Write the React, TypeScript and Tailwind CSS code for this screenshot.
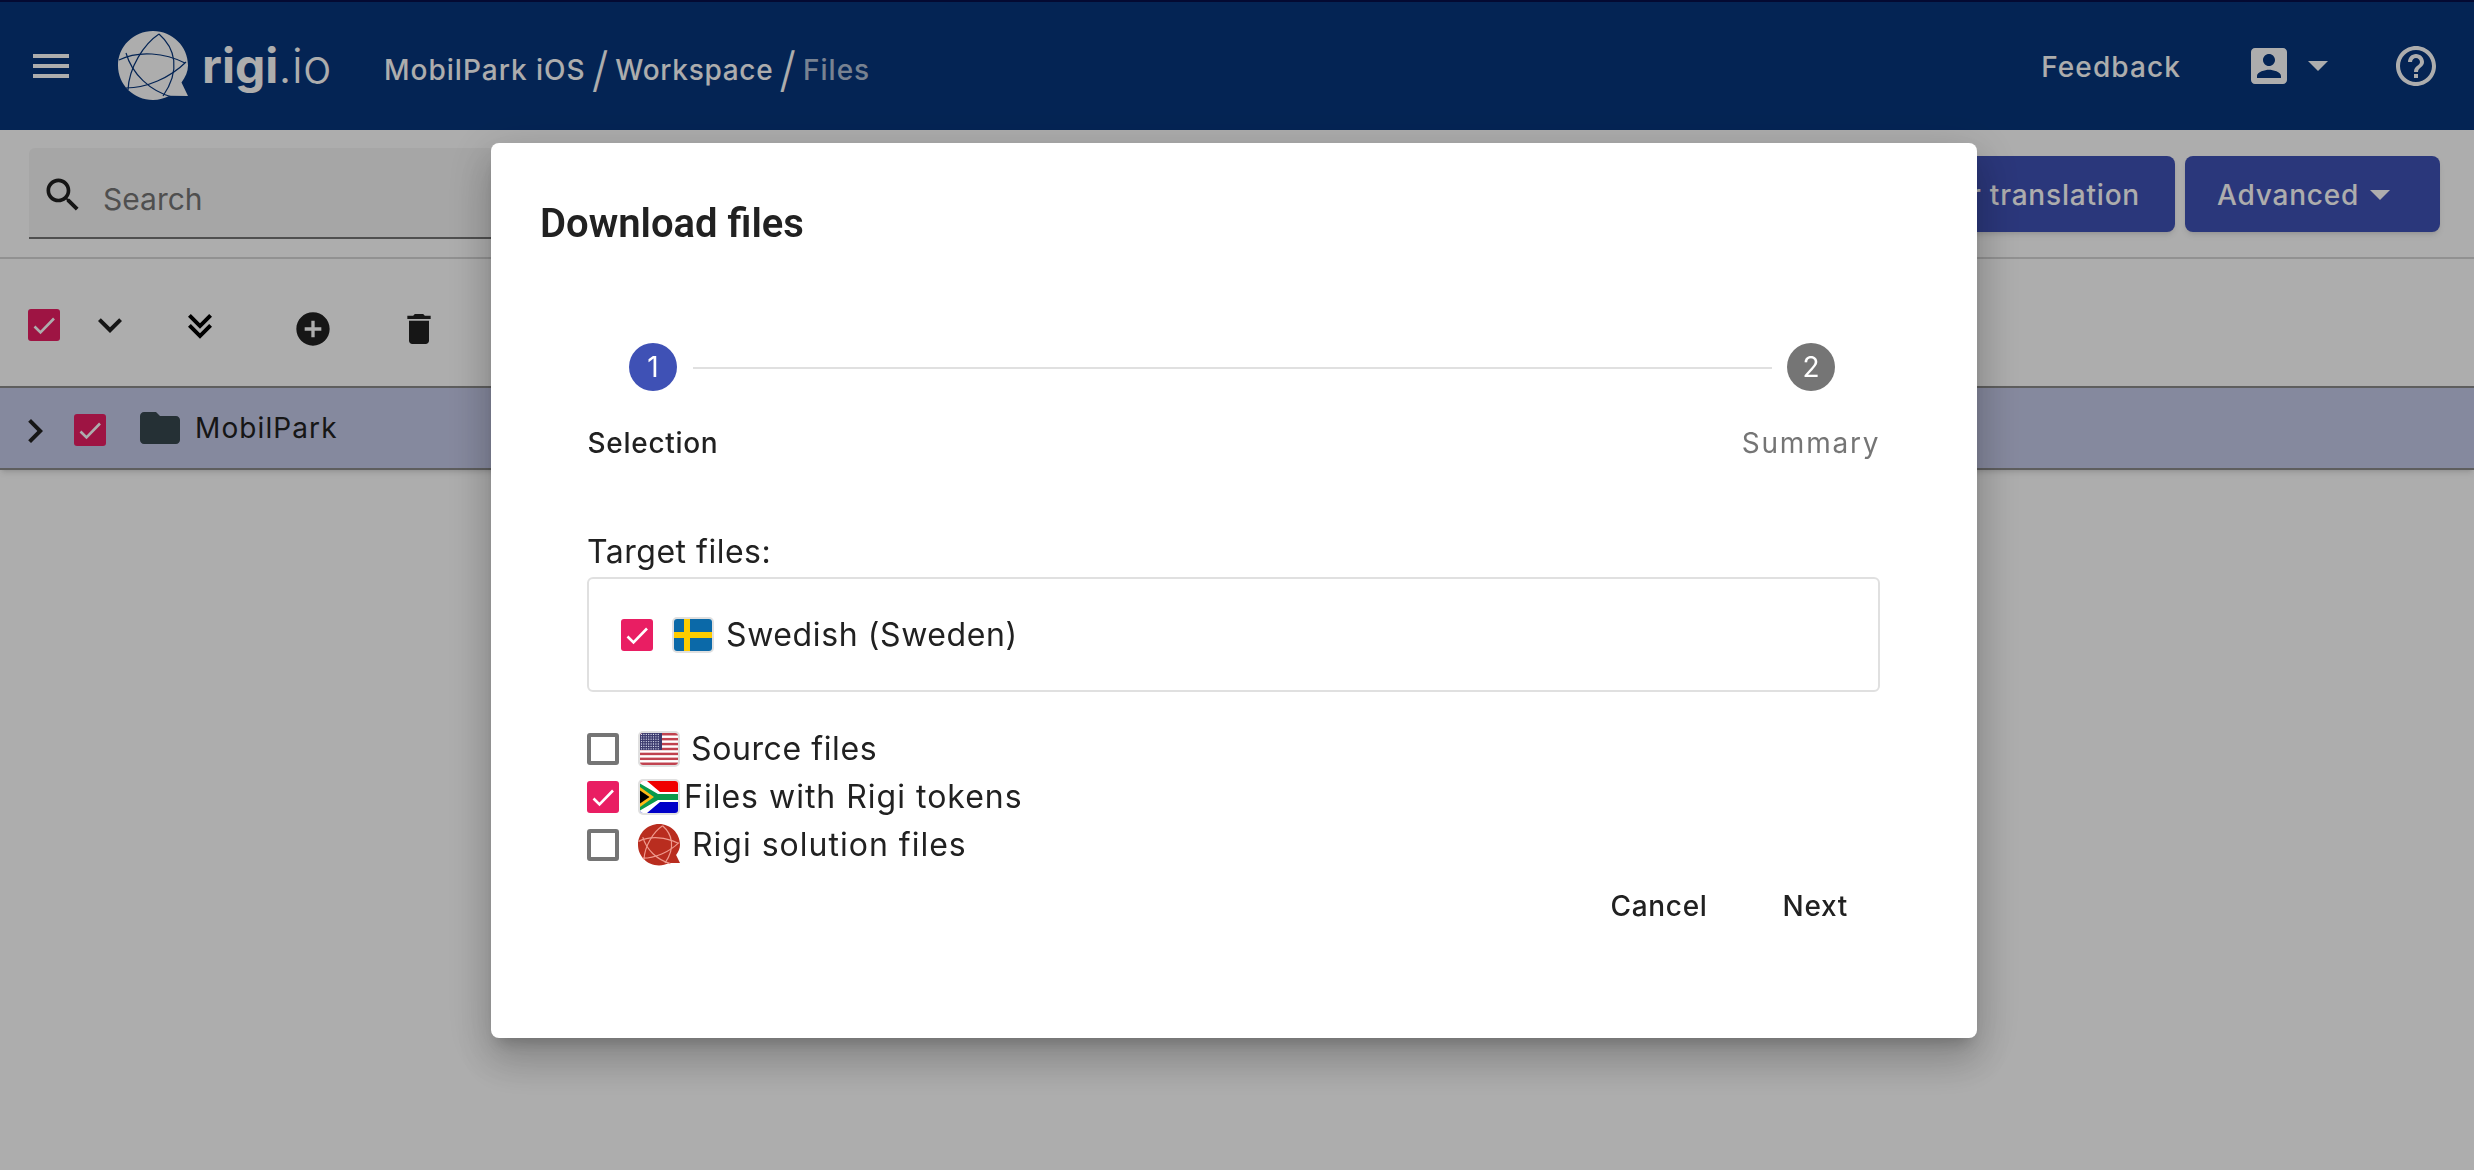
import type { ReactNode } from 'react';

function Icon({ d, size = 48, className = '' }: { d: string; size?: number; className?: string }) {
  return (
    <svg viewBox="0 0 24 24" width={size} height={size} fill="currentColor" className={`shrink-0 ${className}`}>
      <path d={d} />
    </svg>
  );
}

function Checkbox({ checked = false, className = '' }: { checked?: boolean; className?: string }) {
  if (!checked) {
    return <div className={`w-8 h-8 shrink-0 rounded-[3px] border-4 border-[#757575] ${className}`} />;
  }
  return (
    <div className={`w-8 h-8 shrink-0 rounded-[3px] bg-[#e91e63] ${className}`}>
      <svg viewBox="0 0 32 32" width={32} height={32} fill="none" stroke="#fff" strokeWidth={2.6}>
        <path d="M6.5 17.5l6 6L26 9.5" />
      </svg>
    </div>
  );
}

function RigiGlobe({ size, fill, line, width = 1.2 }: { size: number; fill: string; line: string; width?: number }) {
  return (
    <svg viewBox="0 0 70 69" width={size} height={size * 0.986} className="shrink-0">
      <path
        d="M35 0C15.5 0 0 15.500 0 34.500S15.500 69 35 69c6 0 11.500-1.500 16.500-4.200L70 65l-6.500-13.500C67.500 46 70 40.500 70 34.500 70 15.500 54.500 0 35 0z"
        fill={fill}
      />
      <g fill="none" stroke={line} strokeWidth={width}>
        <path d="M41 3C26 13 11 36 10 59" />
        <path d="M41 3c16 14 22 36 4 62" />
        <path d="M1 29c20-10 46-7 66 3" />
        <path d="M8 22c6 21 24 38 46 44" />
        <path d="M8 57c20 0 44-10 60-26" />
      </g>
    </svg>
  );
}

function FlagFrame({ children }: { children: ReactNode }) {
  return (
    <div className="w-[42px] h-9 shrink-0 rounded-[5px] border-2 border-[#e0e0e0] overflow-hidden">
      {children}
    </div>
  );
}

function FlagSE() {
  return (
    <FlagFrame>
      <svg viewBox="0 0 38 32" width={38} height={32}>
        <rect width="38" height="32" fill="#0b69a8" />
        <rect x="10" width="6" height="32" fill="#fecc00" />
        <rect y="13" width="38" height="6" fill="#fecc00" />
      </svg>
    </FlagFrame>
  );
}

function FlagUS() {
  const stripes = [0, 1, 2, 3, 4, 5, 6];
  const dots: [number, number][] = [];
  for (let r = 0; r < 7; r++) {
    for (let c = 0; c < 8; c++) dots.push([1.5 + c * 2.4, 1.4 + r * 2.4]);
  }
  return (
    <FlagFrame>
      <svg viewBox="0 0 38 32" width={38} height={32}>
        <rect width="38" height="32" fill="#fff" />
        {stripes.map((i) => (
          <rect key={i} y={i * 4.92} width="38" height="2.46" fill="#c0424f" />
        ))}
        <rect width="22" height="17" fill="#3c3b6e" />
        {dots.map(([x, y]) => (
          <circle key={`${x}-${y}`} cx={x} cy={y} r={0.65} fill="#dfe3f2" />
        ))}
      </svg>
    </FlagFrame>
  );
}

function FlagZA() {
  return (
    <FlagFrame>
      <svg viewBox="0 0 38 32" width={38} height={32}>
        <rect width="38" height="16" fill="#f00000" />
        <rect y="16" width="38" height="16" fill="#0000c8" />
        <path d="M0 0h7l13 11h18v10H20L7 32H0z" fill="#fff" />
        <path d="M0 2.500L18 13h20v6H18L0 29.500z" fill="#0a9a4a" />
        <path d="M0 6l14 10L0 26z" fill="#ffb915" />
        <path d="M0 9.500L9.500 16 0 22.500z" fill="#000" />
      </svg>
    </FlagFrame>
  );
}

const MENU = 'M3 18h18v-2H3v2zm0-5h18v-2H3v2zm0-7v2h18V6H3z';
const SEARCH =
  'M15.5 14h-.79l-.28-.27C15.41 12.59 16 11.11 16 9.5 16 5.910 13.090 3 9.500 3S3 5.910 3 9.500 5.910 16 9.500 16c1.610 0 3.090-.59 4.230-1.570l.27.28v.79l5 4.990L20.490 19l-4.990-5zm-6 0C7.010 14 5 11.990 5 9.500S7.010 5 9.500 5 14 7.010 14 9.500 11.990 14 9.500 14z';
const EXPAND = 'M16.590 8.590L12 13.170 7.410 8.590 6 10l6 6 6-6z';
const DOUBLE = 'M18 6.410L16.590 5 12 9.580 7.410 5 6 6.410l6 6zM18 11.410L16.590 10 12 14.580 7.410 10 6 11.410l6 6z';
const ADD =
  'M12 2C6.480 2 2 6.480 2 12s4.480 10 10 10 10-4.480 10-10S17.520 2 12 2zm5 11h-4v4h-2v-4H7v-2h4V7h2v4h4v2z';
const TRASH = 'M6 19c0 1.100.9 2 2 2h8c1.100 0 2-.9 2-2V7H6v12zM19 4h-3.500l-1-1h-5l-1 1H5v2h14V4z';
const CHEVRON = 'M10 6L8.590 7.410 13.170 12l-4.580 4.590L10 18l6-6z';
const FOLDER =
  'M10 4H4c-1.100 0-1.990.9-1.990 2L2 18c0 1.100.9 2 2 2h16c1.100 0 2-.9 2-2V8c0-1.100-.9-2-2-2h-8l-2-2z';
const ACCOUNT =
  'M3 5v14c0 1.100.89 2 2 2h14c1.100 0 2-.9 2-2V5c0-1.100-.9-2-2-2H5c-1.110 0-2 .9-2 2zm12 4c0 1.660-1.340 3-3 3s-3-1.340-3-3 1.340-3 3-3 3 1.340 3 3zm-9 8c0-2 4-3.100 6-3.100s6 1.100 6 3.100v1H6v-1z';
const HELP =
  'M11 18h2v-2h-2v2zm1-16C6.480 2 2 6.480 2 12s4.480 10 10 10 10-4.480 10-10S17.520 2 12 2zm0 18c-4.410 0-8-3.590-8-8s3.590-8 8-8 8 3.590 8 8-3.590 8-8 8zm0-14c-2.210 0-4 1.790-4 4h2c0-1.100.9-2 2-2s2 .9 2 2c0 2-3 1.750-3 5h2c0-2.250 3-2.500 3-5 0-2.210-1.790-4-4-4z';

function Caret({ className = '' }: { className?: string }) {
  return <div className={`w-0 h-0 border-x-[10px] border-x-transparent border-t-[10px] border-t-white ${className}`} />;
}

function Header() {
  return (
    <header className="h-[130px] border-t-2 border-[#07104a] bg-[#07367d] text-white flex items-center">
      <Icon d={MENU} className="ml-[27px]" />
      <div className="ml-[43px]">
        <RigiGlobe size={70} fill="#fff" line="#07367d" />
      </div>
      <div className="ml-[14px] w-[130px] text-[48px] leading-none whitespace-nowrap">
        <span className="font-bold">rigi</span>
        <span className="font-light">.io</span>
      </div>
      <nav className="ml-[52px] mt-[7px] flex items-center text-[28px] font-medium tracking-[1px] whitespace-nowrap">
        <span>MobilPark iOS</span>
        <span className="mx-[6px] text-[48px] font-light leading-none">/</span>
        <span className="tracking-[0.7px]">Workspace</span>
        <span className="mx-[6px] text-[48px] font-light leading-none">/</span>
        <span className="text-white/70">Files</span>
      </nav>
      <span className="ml-auto mt-[2px] text-[28px] font-medium tracking-[1.1px]">Feedback</span>
      <Icon d={ACCOUNT} className="ml-[64px]" size={48} />
      <Caret className="ml-[15px]" />
      <Icon d={HELP} className="ml-[64px] mr-[34px]" />
    </header>
  );
}

function SearchBar() {
  return (
    <div className="h-[129px] flex items-start border-b-2 border-[#d6d6d6] bg-white">
      <div className="mt-[18px] ml-[29px] w-[900px] h-[91px] bg-[#f5f5f5] border-b-2 border-[#757575] rounded-t-md flex items-center pt-[4px]">
        <Icon d={SEARCH} size={44} className="ml-[12px] text-[#212121]" />
        <span className="ml-[18px] mt-[10px] text-[30px] text-[#757575]">Search</span>
      </div>
      <button className="mt-[26px] ml-auto h-[76px] pl-[32px] pr-[35px] pt-[2px] rounded-lg bg-[#3f51b5] text-white text-[28px] font-medium tracking-[0.8px] shadow-md whitespace-nowrap">
        Prepare for translation
      </button>
      <button className="mt-[26px] ml-[10px] mr-[34px] h-[76px] w-[255px] pl-[32px] pt-[2px] rounded-lg bg-[#3f51b5] text-white text-[28px] font-medium tracking-[0.8px] shadow-md flex items-center gap-[11px]">
        Advanced
        <Caret />
      </button>
    </div>
  );
}

function Toolbar() {
  return (
    <div className="h-[127px] flex items-start bg-white text-[#212121]">
      <Checkbox checked className="mt-[50px] ml-7" />
      <Icon d={EXPAND} className="mt-[42px] ml-[26px]" />
      <Icon d={DOUBLE} className="mt-[45px] ml-[42px] text-black" />
      <Icon d={ADD} size={40} className="mt-[50px] ml-[69px]" />
      <Icon d={TRASH} size={40} className="mt-[50px] ml-[66px]" />
    </div>
  );
}

function FolderRow() {
  return (
    <div className="h-[84px] flex items-center bg-[#c5cae9] border-y-2 border-[#8b8b8b] shadow-md">
      <Icon d={CHEVRON} className="ml-[11px] mt-[6px] text-[#212121]" />
      <Checkbox checked className="ml-[15px] mt-[4px]" />
      <Icon d={FOLDER} className="ml-[30px] text-[#37474f]" />
      <span className="ml-[11px] text-[28px] tracking-[1.1px] text-[#212121]">MobilPark</span>
    </div>
  );
}

function Step({ n, label, active = false, className = '' }: { n: number; label: string; active?: boolean; className?: string }) {
  return (
    <div className={`flex flex-col items-center shrink-0 ${className}`}>
      <div
        className={`w-12 h-12 rounded-full flex items-center justify-center text-white text-[28px] ${
          active ? 'bg-[#3f51b5]' : 'bg-[#757575]'
        }`}
      >
        {n}
      </div>
      <span
        className={`mt-[31px] text-[28px] whitespace-nowrap ${
          active ? 'font-medium tracking-[0.7px] text-[#212121]' : 'tracking-[1.8px] text-[#757575]'
        }`}
      >
        {label}
      </span>
    </div>
  );
}

function Option({ checked = false, flag, label, gap }: { checked?: boolean; flag: ReactNode; label: string; gap: string }) {
  return (
    <div className="h-12 flex items-center text-[32px] text-[#212121]">
      <Checkbox checked={checked} />
      <div className="ml-[19px]">{flag}</div>
      <span className={`whitespace-nowrap ${gap}`}>{label}</span>
    </div>
  );
}

function DownloadDialog() {
  return (
    <div className="fixed inset-0 bg-black/[.32] flex justify-center items-start pt-[143px] pr-[6px]">
      <div className="w-[1486px] h-[895px] bg-white rounded-lg pt-[51px] shadow-[0_11px_15px_-7px_rgba(0,0,0,0.2),0_24px_38px_3px_rgba(0,0,0,0.14),0_9px_46px_8px_rgba(0,0,0,0.12)]">
        <h2 className="ml-[49px] font-[Roboto,sans-serif] text-[40px] leading-[60px] font-semibold text-[#212121]">
          Download files
        </h2>
        <div className="ml-[96px] mr-[97px] mt-[89px]">
          <div className="flex items-start">
            <Step n={1} label="Selection" active className="w-[132px]" />
            <div className="flex-1 h-[2px] mt-[24px] bg-[#e0e0e0] ml-[-26px] mr-[-30px]" />
            <Step n={2} label="Summary" className="w-[138px]" />
          </div>
          <p className="mt-[68px] text-[32px] leading-[40px] tracking-[0.5px] text-[#212121]">Target files:</p>
          <div className="mt-[5px] h-[115px] border-2 border-[#e0e0e0] rounded-md flex items-center pl-[32px] text-[32px] text-[#212121]">
            <Checkbox checked />
            <div className="ml-[19px]">
              <FlagSE />
            </div>
            <span className="ml-[12px] tracking-[0.6px]">Swedish (Sweden)</span>
          </div>
          <div className="mt-[33px]">
            <Option flag={<FlagUS />} label="Source files" gap="ml-[11px] tracking-[0.6px]" />
            <Option checked flag={<FlagZA />} label="Files with Rigi tokens" gap="ml-[4px] tracking-[1px]" />
            <Option
              flag={<RigiGlobe size={42} fill="#b92d1f" line="#ef9a8e" width={2} />}
              label="Rigi solution files"
              gap="ml-[12px] tracking-[1px]"
            />
          </div>
          <div className="flex justify-end items-center mt-[16px] text-[28px] font-medium tracking-[0.7px] text-[#212121]">
            <button>Cancel</button>
            <button className="ml-[75px] mr-[32px]">Next</button>
          </div>
        </div>
      </div>
    </div>
  );
}

export default function App() {
  return (
    <div className="h-screen overflow-hidden bg-white font-[Inter,sans-serif]">
      <Header />
      <SearchBar />
      <Toolbar />
      <FolderRow />
      <DownloadDialog />
    </div>
  );
}
